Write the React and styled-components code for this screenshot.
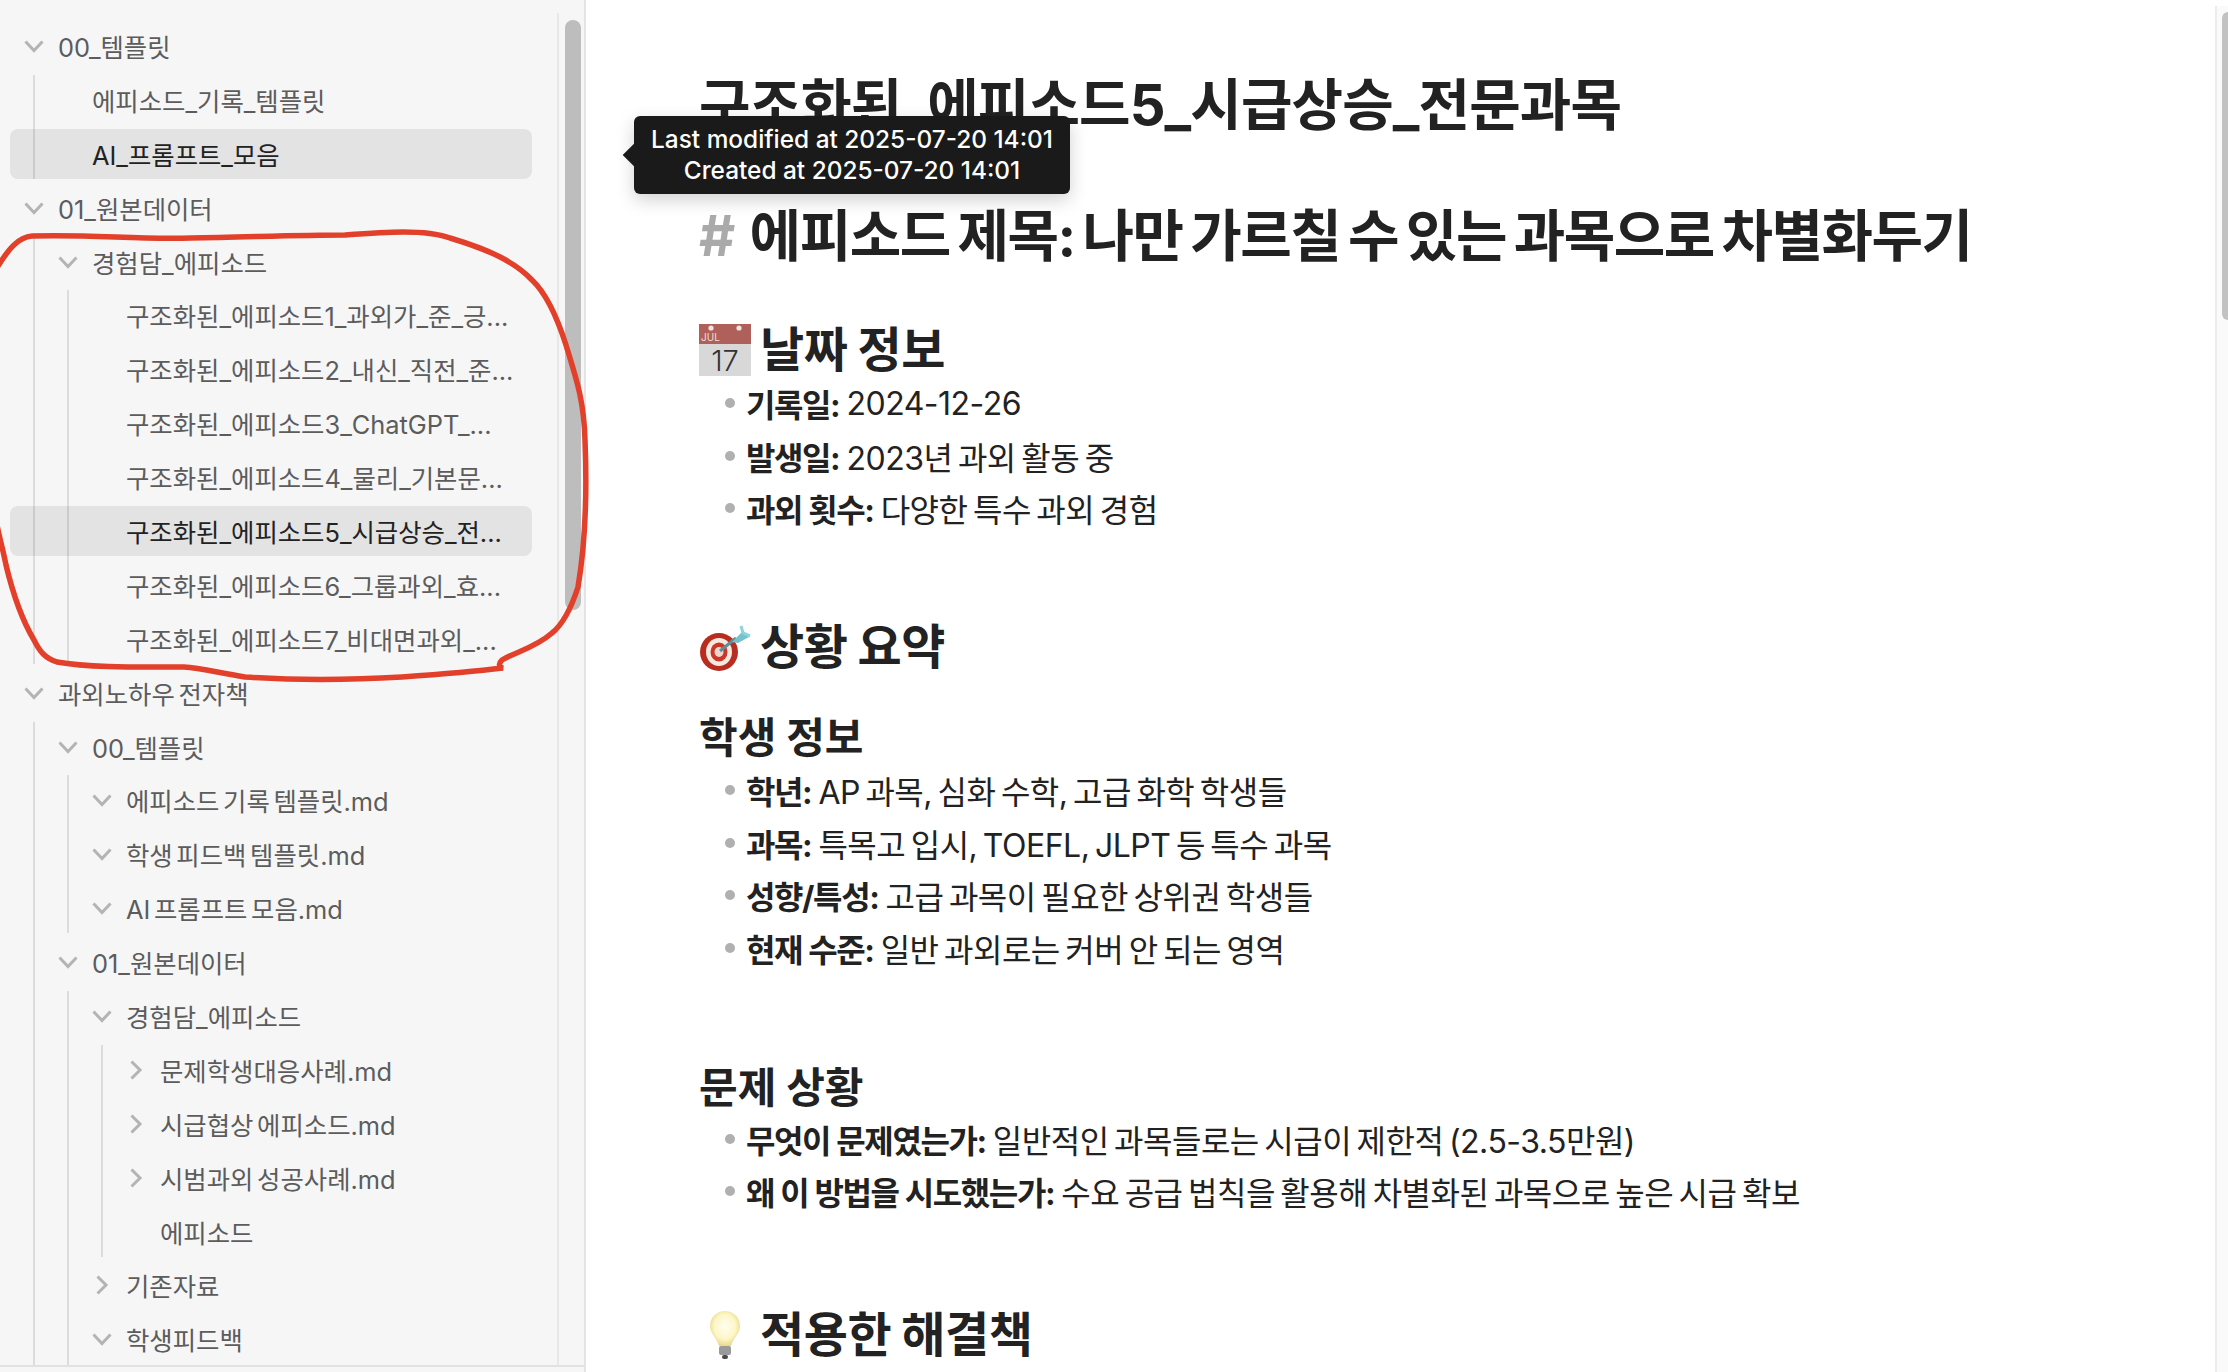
import React from "react";
import styled, { createGlobalStyle } from "styled-components";

const FONT = `Inter, "Noto Sans CJK KR", "Noto Sans", sans-serif`;

const GlobalStyle = createGlobalStyle`
  html, body {
    margin: 0;
    height: 100%;
    overflow: hidden;
    background: #fff;
    font-family: ${FONT};
  }
  #root {
    height: 100%;
  }
`;

const Page = styled.div`
  position: relative;
  display: flex;
  height: 1372px;
  overflow: hidden;
`;

const Sidebar = styled.aside`
  flex: 0 0 586px;
  box-sizing: border-box;
  display: flex;
  flex-direction: column;
  background: #f6f6f6;
  border-right: 2px solid #e4e4e4;
`;

const SidebarBody = styled.div`
  flex: 1;
  min-height: 0;
  display: flex;
`;

const SidebarFooter = styled.div`
  flex: 0 0 5px;
  border-top: 2px solid #e2e2e2;
`;

const Tree = styled.div`
  flex: 1;
  min-width: 0;
  overflow: hidden;
  padding: 21px 25px 0 1px;
`;

const TreeTrack = styled.div`
  flex: 0 0 27px;
  box-sizing: border-box;
  margin-top: 13px;
  border-left: 2px solid #e8e8e8;
  padding: 7px 0 0 6px;
`;

const TreeThumb = styled.div`
  width: 16px;
  height: 590px;
  border-radius: 8px;
  background: #bdbdbd;
`;

const Group = styled.div`
  margin-left: 32px;
  padding-bottom: ${(p) => p.$tail || 0}px;
  border-left: 2px solid #dcdcdc;
`;

const Row = styled.div`
  box-sizing: border-box;
  height: 50px;
  margin: 0 0 3.9px ${(p) => 9 - p.$level * 34}px;
  padding-left: ${(p) => p.$level * 34}px;
  display: flex;
  align-items: center;
  border-radius: 8px;
  background: ${(p) => (p.$active ? "rgba(0, 0, 0, 0.075)" : "transparent")};
  color: ${(p) => (p.$active ? "#222" : "#5c5c5c")};
  font-size: 25.4px;
  word-spacing: -3.5px;
  white-space: nowrap;
`;

const Caret = styled.span`
  flex: 0 0 48px;
  display: flex;
  justify-content: center;
  align-items: center;
  color: #b4b4b4;
`;

const Doc = styled.main`
  flex: 1;
  min-width: 0;
  padding: 70px 0 0 113px;
  color: #222;
`;

const Title = styled.h1`
  margin: 0;
  font-size: 56px;
  line-height: 70px;
  font-weight: 700;
  letter-spacing: -0.9px;
  white-space: nowrap;
`;

const HeadingOne = styled(Title)`
  margin-top: 61px;
  letter-spacing: -1.5px;
  word-spacing: -4px;
`;

const Hash = styled.span`
  margin-right: 8px;
  color: #aaa;
`;

const HeadingTwo = styled.h2`
  display: flex;
  align-items: center;
  gap: 9px;
  margin: ${(p) => p.$top}px 0 ${(p) => p.$bottom}px;
  font-size: 48px;
  line-height: 60px;
  font-weight: 700;
  letter-spacing: -0.4px;
  word-spacing: -1px;
`;

const HeadingThree = styled.h3`
  margin: ${(p) => p.$top}px 0 ${(p) => p.$bottom}px;
  font-size: 42px;
  line-height: 56px;
  font-weight: 700;
`;

const List = styled.ul`
  margin: 0;
  padding: 0 0 0 26px;
  list-style: none;
`;

const Item = styled.li`
  display: flex;
  align-items: center;
  height: 52.4px;
  font-size: 32px;
  letter-spacing: -0.5px;
  word-spacing: -3px;
  white-space: nowrap;
`;

const Dot = styled.span`
  flex: 0 0 10px;
  height: 10px;
  margin-right: 11px;
  border-radius: 50%;
  background: #b0b0b0;
`;

const Label = styled.strong`
  font-weight: 700;
  letter-spacing: -1.4px;
  word-spacing: 0;
  margin-right: 0.22em;
`;

const DocTrack = styled.div`
  flex: 0 0 13px;
  box-sizing: border-box;
  margin-top: 6px;
  border-left: 2px solid #ececec;
  background: #fafafa;
  padding: 6px 0 0 5px;
`;

const DocThumb = styled.div`
  height: 308px;
  border-radius: 6px 0 0 6px;
  background: #c2c2c2;
`;

const Tooltip = styled.div`
  position: absolute;
  left: 634px;
  top: 116px;
  width: 436px;
  height: 78px;
  box-sizing: border-box;
  padding-top: 8px;
  border-radius: 6px;
  background: #1a1a1a;
  box-shadow: 0 6px 18px rgba(0, 0, 0, 0.18);
  color: #fff;
  font-size: 24.4px;
  line-height: 31px;
  font-weight: 500;
  text-align: center;
  white-space: nowrap;
  &::before {
    content: "";
    position: absolute;
    left: -8px;
    top: 31px;
    width: 16px;
    height: 16px;
    background: #1a1a1a;
    transform: rotate(45deg);
  }
`;

const Annotation = styled.svg`
  position: absolute;
  left: 0;
  top: 0;
  width: 600px;
  height: 700px;
  pointer-events: none;
`;

const ChevronDown = () => (
  <svg width="20" height="14" viewBox="0 0 20 14" fill="none">
    <path d="M1.5 2.5 L10 11.5 L18.5 2.5" stroke="currentColor" strokeWidth="3" />
  </svg>
);

const ChevronRight = () => (
  <svg width="14" height="22" viewBox="0 0 14 22" fill="none">
    <path d="M2.5 2.5 L11 11 L2.5 19.5" stroke="currentColor" strokeWidth="3" />
  </svg>
);

const CalendarIcon = () => (
  <svg width="52" height="52" viewBox="0 0 52 52" style={{ flex: "none" }}>
    <rect x="0" y="0" width="52" height="52" fill="#d8d8d8" />
    <rect x="0" y="0" width="52" height="20" fill="#b0605a" />
    <circle cx="12" cy="4" r="2.6" fill="#f0e4e2" />
    <circle cx="40" cy="4" r="2.6" fill="#f0e4e2" />
    <text x="2" y="17" fontSize="10" fontWeight="400" letterSpacing="0" fill="#f3dcda" fontFamily="Inter, sans-serif">JUL</text>
    <text x="26" y="47" fontSize="29" fontWeight="300" letterSpacing="0" textAnchor="middle" fill="#333" fontFamily="Inter, sans-serif">17</text>
  </svg>
);

const TargetIcon = () => (
  <svg width="52" height="48" viewBox="0 0 52 48" style={{ flex: "none" }}>
    <circle cx="20" cy="29" r="19" fill="#b92d20" />
    <ellipse cx="20" cy="29" rx="13" ry="14" fill="#f4e9df" />
    <ellipse cx="20" cy="29" rx="8.5" ry="9.5" fill="#c9372a" />
    <ellipse cx="20" cy="29" rx="4.5" ry="5" fill="#efd8ca" />
    <path d="M21 28 L37 15" stroke="#5e8f96" strokeWidth="3" />
    <path d="M33 19 L44 8 L50 14 L39 20 Z" fill="#73c2cc" />
    <path d="M42 3 L44 10 L51 13" stroke="#8fd3da" strokeWidth="3" fill="none" />
  </svg>
);

const BulbIcon = () => (
  <svg width="52" height="52" viewBox="0 0 52 52" style={{ flex: "none" }}>
    <defs>
      <radialGradient id="bulbGlow" cx="50%" cy="45%" r="55%">
        <stop offset="0%" stopColor="#fffef2" />
        <stop offset="65%" stopColor="#fdf6c6" />
        <stop offset="100%" stopColor="#e8d98a" />
      </radialGradient>
    </defs>
    <path d="M26 2 C35 2 41 9 41 17 C41 25 34 29 32 37 L20 37 C18 29 11 25 11 17 C11 9 17 2 26 2 Z" fill="url(#bulbGlow)" />
    <rect x="20" y="37" width="12" height="9" rx="2" fill="#9a9a9a" />
    <rect x="23" y="46" width="6" height="4" rx="2" fill="#4a4a4a" />
  </svg>
);

const TreeRow = ({ level = 0, caret, active, children }) => (
  <Row $level={level} $active={active}>
    <Caret>
      {caret === "down" && <ChevronDown />}
      {caret === "right" && <ChevronRight />}
    </Caret>
    {children}
  </Row>
);

const App = () => {
  return (
    <Page>
      <GlobalStyle />
      <Sidebar>
        <SidebarBody>
          <Tree>
            <TreeRow caret="down">00_템플릿</TreeRow>
            <Group>
              <TreeRow level={1}>에피소드_기록_템플릿</TreeRow>
              <TreeRow level={1} active>AI_프롬프트_모음</TreeRow>
            </Group>
            <TreeRow caret="down">01_원본데이터</TreeRow>
            <Group>
              <TreeRow level={1} caret="down">경험담_에피소드</TreeRow>
              <Group>
                <TreeRow level={2}>구조화된_에피소드1_과외가_준_긍...</TreeRow>
                <TreeRow level={2}>구조화된_에피소드2_내신_직전_준...</TreeRow>
                <TreeRow level={2}>구조화된_에피소드3_ChatGPT_...</TreeRow>
                <TreeRow level={2}>구조화된_에피소드4_물리_기본문...</TreeRow>
                <TreeRow level={2} active>구조화된_에피소드5_시급상승_전...</TreeRow>
                <TreeRow level={2}>구조화된_에피소드6_그룹과외_효...</TreeRow>
                <TreeRow level={2}>구조화된_에피소드7_비대면과외_...</TreeRow>
              </Group>
            </Group>
            <TreeRow caret="down">과외노하우 전자책</TreeRow>
            <Group $tail={8}>
              <TreeRow level={1} caret="down">00_템플릿</TreeRow>
              <Group>
                <TreeRow level={2} caret="down">에피소드 기록 템플릿.md</TreeRow>
                <TreeRow level={2} caret="down">학생 피드백 템플릿.md</TreeRow>
                <TreeRow level={2} caret="down">AI 프롬프트 모음.md</TreeRow>
              </Group>
              <TreeRow level={1} caret="down">01_원본데이터</TreeRow>
              <Group $tail={8}>
                <TreeRow level={2} caret="down">경험담_에피소드</TreeRow>
                <Group>
                  <TreeRow level={3} caret="right">문제학생대응사례.md</TreeRow>
                  <TreeRow level={3} caret="right">시급협상 에피소드.md</TreeRow>
                  <TreeRow level={3} caret="right">시범과외 성공사례.md</TreeRow>
                  <TreeRow level={3}>에피소드</TreeRow>
                </Group>
                <TreeRow level={2} caret="right">기존자료</TreeRow>
                <TreeRow level={2} caret="down">학생피드백</TreeRow>
              </Group>
            </Group>
          </Tree>
          <TreeTrack>
            <TreeThumb />
          </TreeTrack>
        </SidebarBody>
        <SidebarFooter />
      </Sidebar>

      <Doc>
        <Title>구조화된_에피소드5_시급상승_전문과목</Title>
        <HeadingOne as="div">
          <Hash>#</Hash> 에피소드 제목: 나만 가르칠 수 있는 과목으로 차별화두기
        </HeadingOne>

        <HeadingTwo $top={49} $bottom={-3}>
          <CalendarIcon />
          날짜 정보
        </HeadingTwo>
        <List>
          <Item><Dot /><Label>기록일:</Label> 2024-12-26</Item>
          <Item><Dot /><Label>발생일:</Label> 2023년 과외 활동 중</Item>
          <Item><Dot /><Label>과외 횟수:</Label> 다양한 특수 과외 경험</Item>
        </List>

        <HeadingTwo $top={83} $bottom={-1}>
          <TargetIcon />
          상황 요약
        </HeadingTwo>
        <HeadingThree $top={34} $bottom={-2}>학생 정보</HeadingThree>
        <List>
          <Item><Dot /><Label>학년:</Label> AP 과목, 심화 수학, 고급 화학 학생들</Item>
          <Item><Dot /><Label>과목:</Label> 특목고 입시, TOEFL, JLPT 등 특수 과목</Item>
          <Item><Dot /><Label>성향/특성:</Label> 고급 과목이 필요한 상위권 학생들</Item>
          <Item><Dot /><Label>현재 수준:</Label> 일반 과외로는 커버 안 되는 영역</Item>
        </List>

        <HeadingThree $top={86} $bottom={-3}>문제 상황</HeadingThree>
        <List>
          <Item><Dot /><Label>무엇이 문제였는가:</Label> 일반적인 과목들로는 시급이 제한적 (2.5-3.5만원)</Item>
          <Item><Dot /><Label>왜 이 방법을 시도했는가:</Label> 수요 공급 법칙을 활용해 차별화된 과목으로 높은 시급 확보</Item>
        </List>

        <HeadingTwo $top={87} $bottom={0}>
          <BulbIcon />
          적용한 해결책
        </HeadingTwo>
      </Doc>
      <DocTrack>
        <DocThumb />
      </DocTrack>

      <Tooltip>
        Last modified at 2025-07-20 14:01
        <br />
        Created at 2025-07-20 14:01
      </Tooltip>

      <Annotation viewBox="0 0 600 700" fill="none">
        <path
          d="M-2 266 C8 250 18 237 32 236 C90 234 140 240 191 238 C250 237 300 235 345 235 C385 232 425 229 450 238 C490 250 515 262 532 280 C548 295 558 320 566 345 C576 378 584 400 585 440 C587 490 586 540 578 587 C570 612 562 625 552 633 C535 648 515 652 502 660 C498 664 499 667 503 668 C470 672 430 675 402 677 C350 680 290 680 245 677 C215 672 200 668 184 667 C140 667 90 668 57 662 C45 658 40 652 34 640 C22 620 12 590 6 565 C3 550 0 540 -3 525"
          stroke="#e2402a"
          strokeWidth="5.5"
          strokeLinecap="round"
        />
      </Annotation>
    </Page>
  );
};

export default App;
